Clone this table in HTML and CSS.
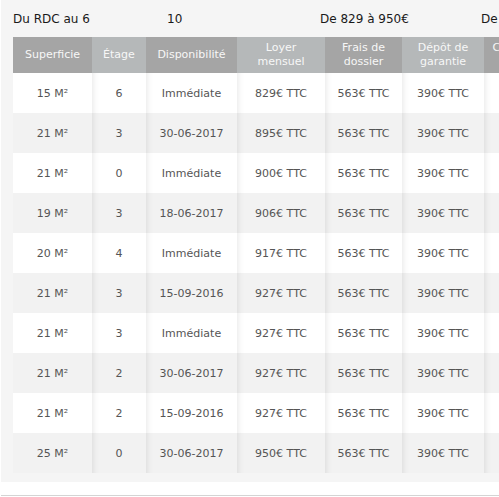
FILE: index.html
```html
<!DOCTYPE html>
<html lang="fr">
<head>
<meta charset="utf-8">
<title>Lots</title>
<link rel="stylesheet" href="styles.css">
</head>
<body>
<div class="panel">
  <div class="summary">
    <span class="s1">Du RDC au 6</span>
    <span class="s2">10</span>
    <span class="s3">De 829 à 950€</span>
    <span class="s4">De</span>
  </div>
  <table class="lots">
    <thead>
      <tr>
        <th class="c1 dark">Superficie</th>
        <th class="c2 light">Étage</th>
        <th class="c3 dark">Disponibilité</th>
        <th class="c4 light">Loyer<br>mensuel</th>
        <th class="c5 dark">Frais de<br>dossier</th>
        <th class="c6 light">Dépôt de<br>garantie</th>
        <th class="c7 dark">Charges<br>TTC</th>
      </tr>
    </thead>
    <tbody>
      <tr><td>15 M²</td><td>6</td><td>Immédiate</td><td>829€ TTC</td><td>563€ TTC</td><td>390€ TTC</td><td></td></tr>
      <tr><td>21 M²</td><td>3</td><td>30-06-2017</td><td>895€ TTC</td><td>563€ TTC</td><td>390€ TTC</td><td></td></tr>
      <tr><td>21 M²</td><td>0</td><td>Immédiate</td><td>900€ TTC</td><td>563€ TTC</td><td>390€ TTC</td><td></td></tr>
      <tr><td>19 M²</td><td>3</td><td>18-06-2017</td><td>906€ TTC</td><td>563€ TTC</td><td>390€ TTC</td><td></td></tr>
      <tr><td>20 M²</td><td>4</td><td>Immédiate</td><td>917€ TTC</td><td>563€ TTC</td><td>390€ TTC</td><td></td></tr>
      <tr><td>21 M²</td><td>3</td><td>15-09-2016</td><td>927€ TTC</td><td>563€ TTC</td><td>390€ TTC</td><td></td></tr>
      <tr><td>21 M²</td><td>3</td><td>Immédiate</td><td>927€ TTC</td><td>563€ TTC</td><td>390€ TTC</td><td></td></tr>
      <tr><td>21 M²</td><td>2</td><td>30-06-2017</td><td>927€ TTC</td><td>563€ TTC</td><td>390€ TTC</td><td></td></tr>
      <tr><td>21 M²</td><td>2</td><td>15-09-2016</td><td>927€ TTC</td><td>563€ TTC</td><td>390€ TTC</td><td></td></tr>
      <tr><td>25 M²</td><td>0</td><td>30-06-2017</td><td>950€ TTC</td><td>563€ TTC</td><td>390€ TTC</td><td></td></tr>
    </tbody>
  </table>
</div>
<div class="footer-line"></div>
</body>
</html>
```
FILE: styles.css
```css
html, body {
  margin: 0;
  padding: 0;
  background: #ffffff;
  overflow: hidden;
  font-family: "DejaVu Sans", Verdana, sans-serif;
}

.panel {
  margin-left: 1px;
  width: 640px;
  background: #f5f5f5;
  padding: 0 0 9px 12px;
}

.summary {
  height: 37px;
  display: flex;
  align-items: center;
  font-size: 12px;
  color: #1a1a1a;
}

.summary span { display: block; flex: none; }
.s1 { width: 154px; }
.s2 { width: 153px; }
.s3 { width: 161px; }
.s4 { width: 60px; }

.lots {
  border-collapse: collapse;
  table-layout: fixed;
  width: 533px;
  font-size: 11px;
}

.lots th {
  height: 36px;
  padding: 0;
  color: #f7f7f7;
  font-weight: normal;
  line-height: 14px;
  text-align: center;
  vertical-align: middle;
}

.lots th.dark { background: #a5a5a5; }
.lots th.light { background: #b5b8b9; }

.c1 { width: 79px; }
.c2 { width: 54px; }
.c3 { width: 91px; }
.c4 { width: 88px; }
.c5 { width: 77px; }
.c6 { width: 82px; }
.c7 { width: 62px; }

.lots td {
  height: 40px;
  padding: 0;
  text-align: center;
  vertical-align: middle;
  color: #555555;
}

.lots tbody tr:nth-child(odd) td { background: #ffffff; }
.lots tbody tr:nth-child(even) td { background: #f2f2f2; }

.lots td + td {
  box-shadow: inset 7px 0 6px -6px rgba(0, 0, 0, 0.10);
}

.footer-line {
  margin: 13px 0 0 1px;
  height: 1px;
  background: #d4d4d4;
}
```
